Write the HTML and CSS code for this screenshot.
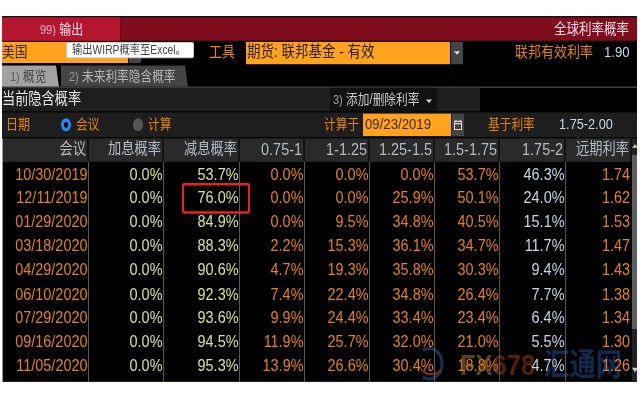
FILE: index.html
```html
<!DOCTYPE html>
<html lang="en">
<head>
    <meta charset="UTF-8">
    <title>全球利率概率</title>
    <link rel="stylesheet" href="styles.css">
</head>
<body>
    <div class="panel">
        <div class="top-bar">
            <div class="export-tab"><span class="num">99)</span> 输出</div>
            <div class="top-title">全球利率概率</div>
        </div>

        <div class="tool-row">
            <div class="country">美国</div>
            <div class="country-btn"></div>
            <div class="tool-label">工具</div>
            <div class="tool-field">期货: 联邦基金 - 有效</div>
            <div class="drop-btn"><span class="tri"></span></div>
            <div class="ff-label">联邦有效利率</div>
            <div class="ff-value">1.90</div>
        </div>

        <div class="tab-row">
            <div class="tab tab-active"><span class="num">1)</span> 概览</div>
            <div class="tab tab-future"><span class="num">2)</span> 未来利率隐含概率</div>
        </div>

        <div class="title-row">
            <div class="title-left">
                <div class="title-text">当前隐含概率</div>
                <div class="add-btn"><span class="num">3)</span> 添加/删除利率 <span class="tri tri-white"></span></div>
            </div>
        </div>

        <div class="date-row">
            <div class="date-label">日期</div>
            <div class="radio radio-on"></div>
            <div class="radio-label">会议</div>
            <div class="radio"></div>
            <div class="radio-label radio-label-last">计算</div>
            <div class="calc-label">计算于</div>
            <div class="date-field">09/23/2019</div>
            <div class="cal-btn">
                <svg width="8" height="9" viewBox="0 0 8 9"><path d="M2 0v2M6 0v2M.5 1.500h7v7h-7zM.5 3.500h7" fill="none" stroke="#d8d8d8" stroke-width="1"/></svg>
            </div>
            <div class="base-label">基于利率</div>
            <div class="base-value">1.75-2.00</div>
        </div>

        <div class="table-wrap">
            <table class="rates">
                <colgroup>
                    <col class="c-date"><col class="c-up"><col class="c-down"><col class="c-mid"><col class="c-mid"><col class="c-mid"><col class="c-mid"><col class="c-top"><col class="c-top">
                </colgroup>
                <thead>
                    <tr><th class="cn">会议</th><th class="cn">加息概率</th><th class="cn">减息概率</th><th>0.75-1</th><th>1-1.25</th><th>1.25-1.5</th><th>1.5-1.75</th><th>1.75-2</th><th class="cn">远期利率</th></tr>
                </thead>
                <tbody>
                    <tr><td>10/30/2019</td><td class="pale">0.0%</td><td class="pale">53.7%</td><td>0.0%</td><td>0.0%</td><td>0.0%</td><td>53.7%</td><td class="blue">46.3%</td><td>1.74</td></tr>
                    <tr><td>12/11/2019</td><td class="pale">0.0%</td><td class="pale">76.0%</td><td>0.0%</td><td>0.0%</td><td>25.9%</td><td>50.1%</td><td class="blue">24.0%</td><td>1.62</td></tr>
                    <tr><td>01/29/2020</td><td class="pale">0.0%</td><td class="pale">84.9%</td><td>0.0%</td><td>9.5%</td><td>34.8%</td><td>40.5%</td><td class="blue">15.1%</td><td>1.53</td></tr>
                    <tr><td>03/18/2020</td><td class="pale">0.0%</td><td class="pale">88.3%</td><td>2.2%</td><td>15.3%</td><td>36.1%</td><td>34.7%</td><td class="blue">11.7%</td><td>1.47</td></tr>
                    <tr><td>04/29/2020</td><td class="pale">0.0%</td><td class="pale">90.6%</td><td>4.7%</td><td>19.3%</td><td>35.8%</td><td>30.3%</td><td class="blue">9.4%</td><td>1.43</td></tr>
                    <tr><td>06/10/2020</td><td class="pale">0.0%</td><td class="pale">92.3%</td><td>7.4%</td><td>22.4%</td><td>34.8%</td><td>26.4%</td><td class="blue">7.7%</td><td>1.38</td></tr>
                    <tr><td>07/29/2020</td><td class="pale">0.0%</td><td class="pale">93.6%</td><td>9.9%</td><td>24.4%</td><td>33.4%</td><td>23.4%</td><td class="blue">6.4%</td><td>1.34</td></tr>
                    <tr><td>09/16/2020</td><td class="pale">0.0%</td><td class="pale">94.5%</td><td>11.9%</td><td>25.7%</td><td>32.0%</td><td>21.0%</td><td class="blue">5.5%</td><td>1.30</td></tr>
                    <tr><td>11/05/2020</td><td class="pale">0.0%</td><td class="pale">95.3%</td><td>13.9%</td><td>26.6%</td><td>30.4%</td><td>18.8%</td><td class="blue">4.7%</td><td>1.26</td></tr>
                </tbody>
            </table>
            <div class="scrollbar">
                <div class="arrow-up"></div>
                <div class="thumb"></div>
                <div class="arrow-down"></div>
            </div>
        </div>

        <div class="tooltip">输出WIRP概率至Excel。</div>
        <div class="highlight"></div>
        <div class="watermark">
            <svg class="wm-logo" width="30" height="29" viewBox="0 0 30 29">
                <path d="M6 3a13 13 0 1 1 0 23" fill="none" stroke="#16304f" stroke-width="3"/>
                <path d="M2 17c6 8 16 8 22 3" fill="none" stroke="#7a2c10" stroke-width="2"/>
            </svg>
            <span class="wm-fx">FX</span><span class="wm-num">678</span>
            <span class="wm-cn">汇通网</span>
        </div>
    </div>
</body>
</html>
```

FILE: styles.css
```css
:root {
    --orange: #e88600;
    --field: #ffa31f;
    --pale: #d9e394;
    --blue: #cbd6e6;
    --head: #b4bcc4;
    --v: 0.85; /* shot is stretched tall: vertical sizes are real px * v, panel scales back */
}

html, body {
    height: 100%;
    margin: 0;
    padding: 0;
    background: white;
}

body {
    font-family: "Liberation Sans", "Noto Sans CJK SC", sans-serif;
    font-size: 12.750px;
}

.panel {
    position: relative;
    width: 635px;
    height: calc(366px * var(--v));
    margin-left: 2px;
    background: black;
    border-top: 1px solid #111;
    box-sizing: border-box;
    overflow: hidden;
    transform: translateY(16px) scaleY(calc(1 / var(--v)));
    transform-origin: left top;
    filter: blur(0.35px);
}

.num {
    font-size: 11px;
    opacity: 0.75;
}

/* top red bar */
.top-bar {
    display: flex;
    justify-content: space-between;
    align-items: center;
    height: calc(24px * var(--v));
    line-height: calc(24px * var(--v));
    background: #7f0d1e;
    color: #e8dfe4;
}

.export-tab {
    width: 119px;
    height: 100%;
    background: #b5152f;
    border-right: 1px solid #5e0915;
    box-sizing: border-box;
    padding-left: 38px;
    font-size: 12px;
    color: #f4e4ea;
}

.top-title {
    padding-right: 8px;
    font-size: 12.500px;
}

/* instrument row */
.tool-row {
    display: flex;
    height: calc(23px * var(--v));
    margin-top: calc(1px * var(--v));
    line-height: calc(22px * var(--v));
    color: var(--orange);
}

.country {
    width: 126px;
    height: calc(21px * var(--v));
    background: var(--field);
    color: #3a2600;
}

.country-btn {
    width: 12px;
    height: calc(21px * var(--v));
    margin-left: 1px;
    background: #444;
}

.tool-label {
    width: 37px;
    margin-left: 68px;
    font-size: 13px;
}

.tool-field {
    width: 204px;
    height: calc(22px * var(--v));
    padding-left: 1px;
    box-sizing: border-box;
    background: var(--field);
    color: #2e2000;
    font-size: 13.500px;
}

.drop-btn {
    display: flex;
    align-items: center;
    justify-content: center;
    width: 12px;
    height: calc(22px * var(--v));
    margin-left: 1px;
    background: #444;
}

.tri {
    display: inline-block;
    width: 0;
    height: 0;
    border-left: 3px solid transparent;
    border-right: 3px solid transparent;
    border-top: 3px solid #ddd;
}

.tri-white {
    margin-left: 3px;
    vertical-align: middle;
}

.ff-label {
    width: 89px;
    margin-left: 52px;
    font-size: 13px;
}

.ff-value {
    font-size: 13.200px;
    color: var(--blue);
}

/* tabs */
.tab-row {
    display: flex;
    gap: 2px;
    height: calc(22px * var(--v));
    border-bottom: calc(2px * var(--v)) solid #555;
}

.tab {
    height: 100%;
    box-sizing: border-box;
    padding-left: 8px;
    background: #444;
    color: #b8b8b8;
    font-size: 11.700px;
    line-height: calc(22px * var(--v));
    clip-path: polygon(0 0, calc(100% - 3px) 0, 100% 100%, 0 100%);
}

.tab-active {
    width: 57px;
    background: #a2a2a2;
    color: #444;
}

.tab-future {
    width: 127px;
}

/* title row */
.title-row {
    height: calc(23px * var(--v));
}

.title-left {
    display: flex;
    width: 478px;
    height: 100%;
    background: #1e1e1e;
    line-height: calc(23px * var(--v));
}

.title-text {
    width: 328px;
    color: #e8e8e8;
    font-size: 13.200px;
}

.add-btn {
    width: 107px;
    box-sizing: border-box;
    padding-left: 3px;
    background: #111;
    color: #ccc;
    font-size: 11.700px;
}

/* date row */
.date-row {
    display: flex;
    align-items: center;
    height: calc(25px * var(--v));
    margin-top: calc(1px * var(--v));
    background: #1e1e1e;
    color: var(--orange);
    font-size: 11.700px;
    line-height: calc(22px * var(--v));
}

.date-label {
    width: 59px;
    padding-left: 4px;
    box-sizing: border-box;
    font-size: 12px;
}

.radio {
    width: 10px;
    height: calc(12px * var(--v));
    border-radius: 50%;
    background: #555;
}

.radio-on {
    width: 4px;
    height: calc(6px * var(--v));
    border: 3px solid #2288ee;
    background: black;
}

.radio-label {
    width: 57px;
    margin-left: 5px;
}

.radio-label-last {
    width: 176px;
}

.calc-label {
    width: 39px;
}

.date-field {
    width: 88px;
    height: calc(22px * var(--v));
    padding-left: 2px;
    box-sizing: border-box;
    background: var(--field);
    color: #3a2a00;
    font-size: 13.200px;
}

.cal-btn {
    display: flex;
    align-items: center;
    justify-content: center;
    width: 12px;
    height: calc(22px * var(--v));
    margin-left: 1px;
    background: #444;
}

.base-label {
    width: 71px;
    margin-left: 24px;
}

.base-value {
    color: var(--blue);
    font-size: 12.750px;
}

/* table */
.table-wrap {
    display: flex;
    height: calc(243px * var(--v));
    margin-top: calc(1px * var(--v));
    border-left: 1px solid #999;
}

.rates {
    width: 628px;
    table-layout: fixed;
    border-collapse: collapse;
    font-size: 14.450px;
}

.c-date { width: 85px; }
.c-up { width: 75px; }
.c-down { width: 76px; }
.c-mid { width: 65px; }
.c-top { width: 66px; }

.rates th {
    height: calc(23px * var(--v));
    padding: 0 1px 0 0;
    box-sizing: border-box;
    background: #2a2a2a;
    border-right: 2px solid #141414;
    color: var(--head);
    font-weight: normal;
    font-size: 14.450px;
    line-height: calc(22px * var(--v));
    text-align: right;
}

.rates th.cn {
    font-size: 13.250px;
}

.rates td {
    height: calc(24px * var(--v));
    padding: 0;
    border-right: 1px solid #5a5a5a;
    color: var(--orange);
    line-height: calc(24px * var(--v));
    text-align: right;
    vertical-align: top;
}

.rates td.pale { color: var(--pale); }
.rates td.blue { color: var(--blue); }

.rates td:last-child {
    padding-right: 1px;
    border-right: none;
}

.rates tbody tr:last-child td {
    height: calc(28px * var(--v));
}

.scrollbar {
    display: flex;
    flex-direction: column;
    align-items: center;
    width: 6px;
    background: #222;
}

.thumb {
    width: 100%;
    height: calc(174px * var(--v));
    margin-top: calc(7px * var(--v));
    background: #5f5f5f;
}

.arrow-up,
.arrow-down {
    width: 0;
    height: 0;
    border-left: 3px solid transparent;
    border-right: 3px solid transparent;
}

.arrow-up {
    margin-top: calc(6px * var(--v));
    border-bottom: calc(4px * var(--v)) solid #ccc;
}

.arrow-down {
    margin-top: auto;
    margin-bottom: calc(9px * var(--v));
    border-top: calc(5px * var(--v)) solid #ccc;
}

/* things on top */
.tooltip {
    position: absolute;
    left: 64px;
    top: calc(25px * var(--v));
    width: 128px;
    height: calc(16px * var(--v));
    box-sizing: border-box;
    padding-left: 5px;
    background: white;
    border: 1px solid #ccc;
    border-radius: 2px;
    color: #444;
    font-size: 10.300px;
    line-height: calc(14px * var(--v));
    white-space: nowrap;
}

.highlight {
    position: absolute;
    left: 180px;
    top: calc(166px * var(--v));
    width: 68px;
    height: calc(30px * var(--v));
    box-sizing: border-box;
    border: 2px solid #ee2211;
    border-radius: 2px;
}

.watermark {
    position: absolute;
    left: 415px;
    top: calc(330px * var(--v));
    display: flex;
    align-items: center;
    height: calc(34px * var(--v));
    mix-blend-mode: lighten;
    font-weight: bold;
    font-size: 25.500px;
    line-height: calc(34px * var(--v));
}

.wm-logo { margin-right: 13px; }
.wm-fx { color: #5a4510; }
.wm-num { color: #5a1d05; margin-right: 8px; }

.wm-cn {
    color: #0f2a4e;
    font-size: 26.350px;
}
```
